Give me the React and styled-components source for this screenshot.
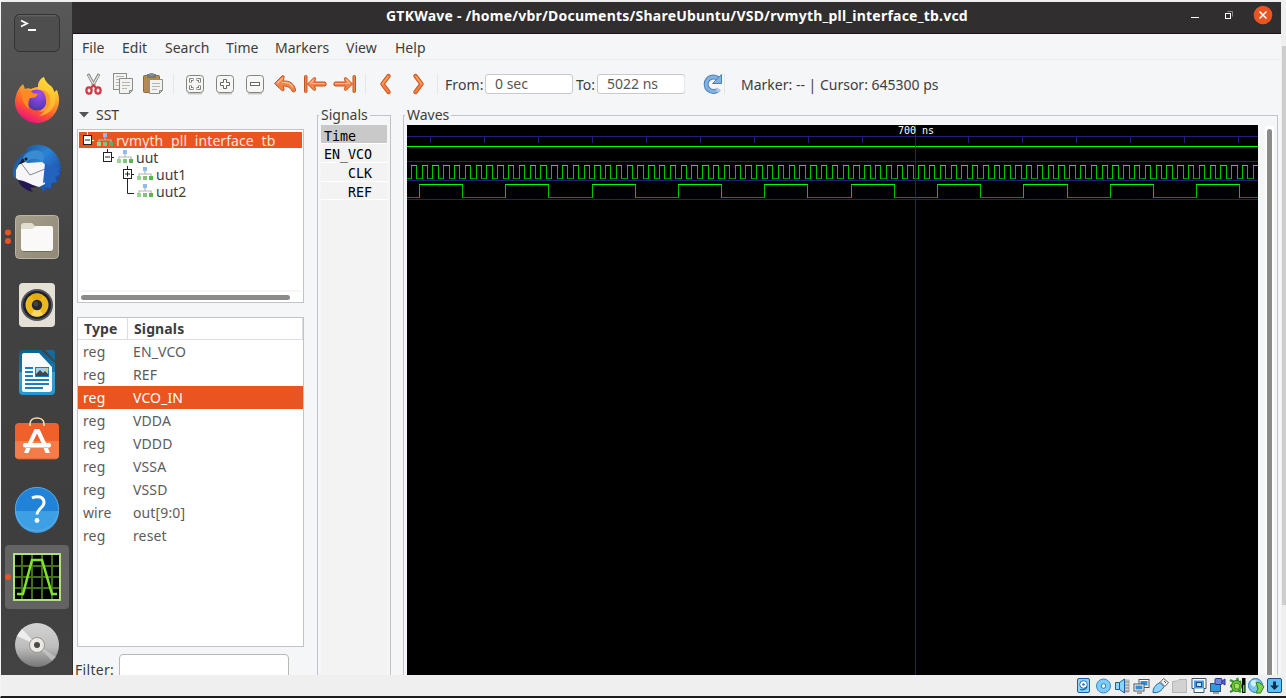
import React from 'react';
import styled, { createGlobalStyle } from 'styled-components';

const Global = createGlobalStyle`
  * { box-sizing: border-box; }
  body { margin: 0; background: #efefef; overflow: hidden; }
  svg { display: block; flex: none; }
`;

const ORANGE = '#e95420';
const LINE = '#c0c3cb';

const Screen = styled.div`
  width: 1286px;
  height: 698px;
  padding-top: 2px;
  background: #efefef;
  border-left: 1px solid #f4f4f4;
  border-bottom: 2px solid #1d1d1f;
  display: flex;
  flex-direction: column;
  overflow: hidden;
  font-family: 'Noto Sans', sans-serif;
  font-size: 14px;
  color: #3d3d3d;
`;
const Desktop = styled.div`
  display: flex;
  height: 673px;
`;

/* Dock */
const Dock = styled.nav`
  width: 72px;
  background: linear-gradient(#585858, #434343 35%, #3e3e3e 80%, #434343);
  border-right: 1px solid #303030;
  padding-left: 4px;
  display: flex;
  flex-direction: column;
  gap: 4px;
  overflow: hidden;
`;
const DockItem = styled.div`
  flex: none;
  width: 64px;
  height: 64px;
  border-radius: 4px;
  background: ${(p) => (p.$active ? '#636363' : 'transparent')};
  &:first-child { margin-top: -1px; }
`;

/* Window */
const Window = styled.main`
  width: 1208px;
  background: #f5f6f7;
  display: flex;
  flex-direction: column;
  overflow: hidden;
`;
const TitleBar = styled.header`
  height: 32px;
  flex: none;
  background: #302e2f;
  border-bottom: 1px solid #1c0f1b;
  display: flex;
  align-items: flex-start;
  color: #fff;
`;
const Title = styled.div`
  width: 1118px;
  padding-left: 313px;
  font-weight: 700;
  font-size: 14px;
  line-height: 28px;
  white-space: nowrap;
  letter-spacing: ${(p) => p.$ls}px;
`;
const MenuBar = styled.div`
  height: 26px;
  flex: none;
  border-bottom: 1px solid #ebebed;
  padding-left: 9px;
  display: flex;
`;
const MenuItem = styled.div`
  width: ${(p) => p.$w}px;
  line-height: 27px;
  white-space: nowrap;
`;
const ToolBar = styled.div`
  height: 48px;
  flex: none;
  padding-left: 5px;
  display: flex;
  align-items: center;
`;
const Tool = styled.div`
  width: ${(p) => p.$w || 30}px;
  height: 24px;
  display: flex;
  align-items: center;
  justify-content: center;
`;
const Sep = styled.div`
  width: 1px;
  height: 20px;
  margin: 0 ${(p) => p.$r}px 0 ${(p) => p.$l}px;
  background: #e6e7e9;
`;
const ToolText = styled.div`
  width: ${(p) => p.$w}px;
  line-height: 20px;
  padding-top: 1px;
  white-space: nowrap;
  letter-spacing: ${(p) => p.$ls || 0}px;
`;
const TimeInput = styled.div`
  width: 88px;
  height: 20px;
  margin-right: ${(p) => p.$r || 0}px;
  border: 1px solid #c9cacf;
  border-radius: 3px;
  background: #fff;
  padding-left: 9px;
  line-height: 18px;
  color: #555;
  white-space: nowrap;
`;

const Body = styled.div`
  flex: 1;
  display: flex;
  min-height: 0;
`;
const LeftPane = styled.section`
  width: 240px;
  padding: 0 8px 0 4px;
  display: flex;
  flex-direction: column;
`;
const SstHead = styled.div`
  height: 21px;
  flex: none;
  display: flex;
  align-items: center;
  gap: 7px;
  padding-left: 2px;
  line-height: 14px;
  padding-bottom: 7px;
`;
const TreeBox = styled.div`
  width: 227px;
  height: 174px;
  flex: none;
  background: #fff;
  border: 1px solid ${LINE};
  padding: 2px 1px 0;
  display: flex;
  flex-direction: column;
`;
const TreeRow = styled.div`
  display: flex;
  height: ${(p) => (p.$sel ? 16 : 17)}px;
  margin-bottom: ${(p) => (p.$sel ? 1 : 0)}px;
  padding-left: ${(p) => p.$depth * 20 + 4}px;
  background: ${(p) => (p.$sel ? ORANGE : 'transparent')};
  color: ${(p) => (p.$sel ? '#fbe3da' : '#3d3d3d')};
`;
const TreeLabel = styled.span`
  padding-left: 3px;
  line-height: 18px;
  white-space: pre;
  letter-spacing: ${(p) => p.$ls || 0}px;
  word-spacing: ${(p) => p.$ws || 0}px;
`;
const HScroll = styled.div`
  margin-top: auto;
  height: 12px;
  border-top: 2px solid #f5f6f7;
  padding: 3px 2px;
`;
const HThumb = styled.div`
  width: 209px;
  height: 5px;
  border-radius: 3px;
  background: #8b8b8a;
`;
const Table = styled.div`
  width: 227px;
  height: 330px;
  flex: none;
  margin-top: 14px;
  border: 1px solid ${LINE};
  background: #fff;
`;
const Row = styled.div`
  height: ${(p) => (p.$head ? 22 : 23)}px;
  display: grid;
  grid-template-columns: 50px 1fr;
  line-height: ${(p) => (p.$head ? 21 : 23)}px;
  font-weight: ${(p) => (p.$head ? 700 : 400)};
  letter-spacing: 0.12px;
  color: ${(p) => (p.$sel ? '#fff' : p.$head ? '#3d3d3d' : '#5c5c5c')};
  background: ${(p) => (p.$sel ? ORANGE : '#fff')};
  border-bottom: ${(p) => (p.$head ? '1px solid #dcdde0' : '0')};
`;
const Cell = styled.div`
  padding-left: ${(p) => (p.$head ? 6 : 5)}px;
  border-right: ${(p) => (p.$head ? '1px solid #dcdde0' : '0')};
  white-space: nowrap;
`;
const FilterRow = styled.div`
  margin: 7px 0 0 -2px;
  display: flex;
`;
const FilterLabel = styled.div`
  width: 44px;
  padding-top: 6px;
  line-height: 20px;
  letter-spacing: 0.3px;
`;
const FilterInput = styled.div`
  width: 170px;
  height: 30px;
  border: 1px solid #b8b9b4;
  border-radius: 4px;
  background: #fff;
`;

const Frame = styled.section`
  width: ${(p) => p.$w}px;
  margin: 7px ${(p) => p.$r}px 0 ${(p) => p.$l}px;
  height: 600px;
  border: 1px solid ${LINE};
`;
const Legend = styled.div`
  width: max-content;
  height: 14px;
  line-height: 14px;
  margin: -8px 0 3px 1px;
  padding: 0 2px;
  background: #f5f6f7;
`;
const NameList = styled.div`
  width: 66px;
  height: 580px;
  margin-left: 3px;
  background: #f3f3f3;
`;
const Name = styled.div`
  height: ${(p) => p.$h}px;
  border-bottom: 1px solid #fff;
  background: ${(p) => (p.$time ? '#c9c9c9' : '#f3f3f3')};
  color: #000;
  font-family: 'DejaVu Sans Mono', monospace;
  font-size: 13.33px;
  line-height: ${(p) => (p.$time ? 23 : 22)}px;
  padding: 0 15px 0 3px;
  text-align: ${(p) => (p.$time ? 'left' : 'right')};
  white-space: nowrap;
`;
const WaveArea = styled.div`
  display: flex;
  margin-left: 3px;
`;
const VTrough = styled.div`
  width: 9px;
  height: 560px;
  margin: 1px 0 0 7px;
  padding: 3px 2px;
  background: #fff;
`;
const VThumb = styled.div`
  height: 560px;
  border-radius: 3px;
  background: #8b8b8a;
`;
const HostScroll = styled.div`
  width: 4px;
  margin-left: 1px;
  height: 559px;
  margin-top: 44px;
  background: #cdcdcd;
`;
const StatusBar = styled.footer`
  height: 21px;
  padding: 2px 0 0 1074px;
  display: flex;
`;
const StatusCell = styled.div`
  width: 19.1px;
  height: 18px;
`;

/* Dock icons, drawn on a 64 x 64 grid */
const DockSvg = ({ children }) => (
  <svg width="64" height="64" viewBox="0 0 64 64">{children}</svg>
);

const TerminalIcon = () => (
  <DockSvg>
    <rect x="9.5" y="13.5" width="45" height="37" rx="5" fill="#4e4e4e" stroke="#333" />
    <path d="M13 14.800h38" stroke="#6a6a6a" />
    <path d="M16 19.500l6 3-6 3" fill="none" stroke="#fff" strokeWidth="1.800" />
    <path d="M23 29h8" stroke="#fff" strokeWidth="2" />
  </DockSvg>
);
const FirefoxIcon = () => (
  <DockSvg>
    <defs>
      <linearGradient id="ff" x1="0.8" y1="0.05" x2="0.35" y2="1">
        <stop offset="0" stopColor="#fff14a" /><stop offset="0.35" stopColor="#ffa72b" />
        <stop offset="0.7" stopColor="#ff5530" /><stop offset="1" stopColor="#e8127c" />
      </linearGradient>
      <radialGradient id="fp" cx="0.6" cy="0.2" r="0.9">
        <stop offset="0" stopColor="#a24bf5" /><stop offset="1" stopColor="#46349f" />
      </radialGradient>
    </defs>
    <path d="M11 27c1-5 3-8 7-12l2 5c2-1 4-1 6 0 2-1 4-2 7-2 0-5 2-8 6-10 1 5 4 7 7 9 2 2 3 4 3 6l3-2c1 3 2 6 2 10 0 13-10 23-22 23S10 44 10 33c0-2 0-4 1-6z" fill="url(#ff)" />
    <path d="M33 18c0-5 2-8 6-10 1 6 10 9 11 19 2 11-6 19-16 20 8-5 10-14 6-20-2-4-6-5-7-9z" fill="#ffcf32" opacity="0.65" />
    <circle cx="32" cy="31" r="10.5" fill="url(#fp)" />
    <path d="M17 23c5-3 8-2 11 1l5 1c-2 4-5 4-8 4-2 3-2 7-1 11-5-4-8-10-7-17z" fill="#ff8a22" />
    <path d="M37 21c6 1 9 6 8 11 0 7-5 11-11 11 5-3 8-7 7-12 0-4-2-7-4-10z" fill="#ff9a2a" />
  </DockSvg>
);
const ThunderbirdIcon = () => (
  <DockSvg>
    <defs>
      <linearGradient id="tb" x1="0" y1="0" x2="1" y2="0.8">
        <stop offset="0" stopColor="#153f7c" /><stop offset="0.5" stopColor="#2a83d6" /><stop offset="1" stopColor="#183f99" />
      </linearGradient>
    </defs>
    <path d="M8 36c0-9 5-17 13-21l2-5 6-2c14-2 26 9 27 23 0 7-2 12-6 16l-2-2-2 8-4-2-5 5v-5l-20-7-4-1c-3-2-5-4-5-7z" fill="url(#tb)" />
    <path d="M19 19c4-5 10-7 16-5 5 2 5 7 2 11-3-4-8-4-13-2l-6 7c-2-4-1-8 1-11z" fill="#3a8bd0" />
    <path d="M11 33l5-9 7 2 14-1 4 3-1 19-6 3-19-6-4-3z" fill="#f6f5f7" />
    <path d="M16 26l9 12 15-6" fill="none" stroke="#8a8a8e" />
    <path d="M13 43c6 0 12 4 19 7l-7 1 3 4c-8-2-13-6-15-12z" fill="#251852" />
    <path d="M40 26c5 4 11 5 15 4l-2 5 2 2-5 3 2 5-6 1 0 5-6-1 1-5-3 1z" fill="#2463bd" />
    <circle cx="21" cy="22" r="1.500" fill="#111" /><path d="M18 21l-5 7 7-3z" fill="#171b33" />
  </DockSvg>
);
const FilesIcon = () => (
  <DockSvg>
    <defs>
      <linearGradient id="fl" x1="0" y1="0" x2="1" y2="1">
        <stop offset="0" stopColor="#a59e8c" /><stop offset="1" stopColor="#8f8876" />
      </linearGradient>
    </defs>
    <circle cx="3" cy="27.6" r="3" fill={ORANGE} /><circle cx="3" cy="36" r="3" fill={ORANGE} />
    <rect x="10.5" y="10.5" width="43" height="43" rx="4" fill="url(#fl)" stroke="#b9b3a2" />
    <path d="M16 21a3 3 0 013-3h8l4 4-2 5H16z" fill="#e0dccf" />
    <path d="M16 24h11l4-3h15a2 2 0 012 2v20a3 3 0 01-3 3H19a3 3 0 01-3-3z" fill="#faf9f8" />
    <path d="M18 46.5h28" stroke="#726c5d" />
  </DockSvg>
);
const RhythmboxIcon = () => (
  <DockSvg>
    <rect x="14" y="10" width="36" height="44" rx="4" fill="#e4e0d6" />
    <circle cx="32" cy="32" r="16" fill="#53555f" /><circle cx="32" cy="32" r="14" fill="#1f222b" />
    <circle cx="32" cy="32" r="11.5" fill="#ecb91c" />
    <path d="M32 32l-6 10a11.5 11.5 0 0012 0z" fill="#f8d95c" /><path d="M32 32l-6-10a11.5 11.5 0 0112 0z" fill="#e2ab12" />
    <circle cx="32" cy="32" r="5.2" fill="#26272a" /><circle cx="31" cy="31" r="2.5" fill="#424346" />
  </DockSvg>
);
const WriterIcon = () => (
  <DockSvg>
    <defs>
      <linearGradient id="wr" x1="0" y1="0" x2="0" y2="1">
        <stop offset="0" stopColor="#0d6292" /><stop offset="0.49" stopColor="#1579b0" />
        <stop offset="0.5" stopColor="#389fce" /><stop offset="1" stopColor="#2795cd" />
      </linearGradient>
    </defs>
    <path d="M18 9h18l14 13v28a4 4 0 01-4 4H18a4 4 0 01-4-4V13a4 4 0 014-4z" fill="url(#wr)" />
    <path d="M40 9h7a3 3 0 013 3v8z" fill="#16699d" />
    <path d="M19 12h15l13 14v22a3 3 0 01-3 3H19a2 2 0 01-2-2V14a2 2 0 012-2z" fill="#fbfbfb" />
    <path d="M20 27h8M20 31h8M20 35h8M20 39h24M20 43h24M20 47h18" stroke="#1c7fbd" strokeWidth="2" />
    <rect x="30.5" y="26.5" width="13" height="9" fill="#9fd2f2" stroke="#1c7fbd" />
    <path d="M31 35v-2l4-4 3 3 2-2 3 3v2z" fill="#3f464d" /><circle cx="42" cy="28.500" r="1.5" fill="#f2cc2c" />
  </DockSvg>
);
const SoftwareIcon = () => (
  <DockSvg>
    <rect x="10" y="14" width="44" height="36" rx="4" fill="#f0602b" />
    <path d="M10 32h44v14a4 4 0 01-4 4H14a4 4 0 01-4-4z" fill="#f37c4a" />
    <path d="M13 50.200h38" stroke="#b94c23" />
    <path d="M25 17v-2c0-8 14-8 14 0v2" fill="none" stroke="#f6dfae" strokeWidth="1.6" />
    <path d="M29.500 20h5l7.500 16h-4.500L32 24.500 26.500 36H22zM21 39h4.500l-2 5H19zM38.500 39H43l2 5h-4.500z" fill="#fff" />
    <rect x="18" y="34" width="28" height="4.500" rx="2" fill="#fff" />
  </DockSvg>
);
const HelpIcon = () => (
  <DockSvg>
    <circle cx="32" cy="32" r="22" fill="#2083d8" />
    <path d="M10 34a22 22 0 0044 0z" fill="#3d9fe4" />
    <circle cx="32" cy="32" r="21.600" fill="none" stroke="#64aee6" strokeWidth="0.8" />
    <path d="M27 21c5-2.500 12-1.500 12 4.500 0 5-6.500 6-7 12" fill="none" stroke="#fff" strokeWidth="3" />
    <circle cx="32" cy="43.500" r="2.400" fill="#fff" />
  </DockSvg>
);
const GtkWaveIcon = () => (
  <DockSvg>
    <circle cx="3" cy="32" r="3" fill={ORANGE} />
    <rect x="9" y="9" width="46" height="46" fill="#000" stroke="#b0e080" strokeWidth="2" />
    <path d="M17 10v44M27 10v44M37 10v44M47 10v44M10 21h44M10 32h44M10 43h44" stroke="#446f1a" strokeWidth="2" />
    <path d="M12 49h6l9-34h10l10 34h5" fill="none" stroke="#80e32c" strokeWidth="2.500" />
  </DockSvg>
);
const DiscIcon = () => (
  <DockSvg>
    <defs>
      <linearGradient id="dc" x1="0" y1="0" x2="0" y2="1">
        <stop offset="0" stopColor="#d4d4d4" /><stop offset="0.55" stopColor="#bdbdbd" /><stop offset="1" stopColor="#777" />
      </linearGradient>
    </defs>
    <circle cx="32" cy="32" r="22" fill="url(#dc)" />
    <path d="M32 32L12 23l5-7z" fill="#f6f6f6" opacity="0.8" />
    <path d="M32 32l19 12-4 4z" fill="#e0e0e0" opacity="0.45" />
    <circle cx="32" cy="32" r="7.500" fill="#ece9e4" stroke="#99958c" /><circle cx="32" cy="32" r="3" fill="#4a4a4a" />
  </DockSvg>
);

const DOCK = [
  TerminalIcon, FirefoxIcon, ThunderbirdIcon, FilesIcon, RhythmboxIcon,
  WriterIcon, SoftwareIcon, HelpIcon, GtkWaveIcon, DiscIcon,
];

/* Toolbar icons */
const T = ({ w = 24, children }) => (
  <svg width={w} height="24" viewBox={`0 0 ${w} 24`}>{children}</svg>
);
const CutIcon = () => (
  <T>
    <path d="M7 2l6.500 12M18 2L11.500 14" stroke="#888a85" strokeWidth="3" />
    <path d="M7.300 3l5.700 10M17.700 3L12 13" stroke="#e8e8e6" strokeWidth="1.200" />
    <ellipse cx="8" cy="18.500" rx="2.600" ry="3.100" fill="none" stroke="#cf3b42" strokeWidth="2.300" />
    <ellipse cx="17" cy="18.500" rx="2.600" ry="3.100" fill="none" stroke="#cf3b42" strokeWidth="2.300" />
    <path d="M10 16l2.500-3 2.500 3" stroke="#cf3b42" strokeWidth="2" fill="none" />
  </T>
);
const CopyIcon = () => (
  <T>
    <rect x="2.500" y="1.500" width="13" height="16" fill="#f2f2f0" stroke="#8c8e89" />
    <path d="M5 4.500h8M5 7.500h8M5 10.500h4M5 13.500h4" stroke="#b6b7b3" />
    <path d="M8.500 6.500h13v12l-3 3h-10z" fill="#f2f2f0" stroke="#8c8e89" />
    <path d="M11 10.500h8M11 13.500h8M11 16.500h5" stroke="#b6b7b3" />
    <path d="M21.500 18.500h-3v3z" fill="#ccc" stroke="#8c8e89" />
  </T>
);
const PasteIcon = () => (
  <T>
    <rect x="2.500" y="3.500" width="16" height="17" rx="1" fill="#b38b52" stroke="#8d6b38" />
    <rect x="6" y="2" width="9" height="4" fill="#777974" /><rect x="8.500" y="1" width="4" height="3" fill="#8c8e89" />
    <path d="M8.500 7.500h13v11l-3 3h-10z" fill="#f2f2f0" stroke="#8c8e89" />
    <path d="M11 11.500h8M11 14.500h8M11 17.500h5" stroke="#b6b7b3" />
    <path d="M21.500 18.500h-3v3z" fill="#ccc" stroke="#8c8e89" />
  </T>
);
const ZoomBase = ({ children }) => (
  <T>
    <path d="M5 21.500h14" stroke="#c9cac8" strokeWidth="2" />
    <rect x="3.500" y="3.500" width="17" height="17" rx="3" fill="#f6f6f5" stroke="#82847f" />
    {children}
  </T>
);
const ZoomFit = () => (
  <ZoomBase>
    <path d="M7.500 10.500v-3h3M13.500 7.500h3v3M16.500 13.500v3h-3M10.500 16.500h-3v-3" fill="none" stroke="#666863" strokeWidth="2.600" />
    <path d="M7.500 10v-2.500h2.500M14 7.500h2.500v2.500M16.500 14v2.500h-2.500M10 16.500h-2.500v-2.500" fill="none" stroke="#fff" strokeWidth="1" />
  </ZoomBase>
);
const ZoomIn = () => (
  <ZoomBase>
    <path d="M10.500 7.500h3v3h3v3h-3v3h-3v-3h-3v-3h3z" fill="#fff" stroke="#666863" />
  </ZoomBase>
);
const ZoomOut = () => (
  <ZoomBase><rect x="7.500" y="10.500" width="9" height="3" fill="#fff" stroke="#666863" /></ZoomBase>
);
const arrow = { fill: '#f0854b', stroke: '#c9501c', strokeWidth: 1, strokeLinejoin: 'round' };
const UndoIcon = () => (
  <T>
    <path {...arrow} d="M1.500 11.500L9 4c1-1 2.500 0 2 1.500L10 9c7-.5 11.500 3 12.500 9 .3 2-2.500 2.500-3.500 1-2-4-5-5-9-5l1 3c.5 1.500-1 2.500-2 1.500z" />
    <path d="M4 11.500l6-5.500M9 10.500c5-.5 9 1 11 5" fill="none" stroke="#fbc08a" strokeWidth="1.200" />
  </T>
);
const FirstIcon = () => (
  <T>
    <rect {...arrow} x="1.500" y="3.500" width="2.500" height="17" rx="1" />
    <path {...arrow} d="M4.500 12l6-6c1.500-1.200 2.500 0 2 1.500l-1 2.500H22c1.500 0 1.500 4 0 4H11.500l1 2.500c.5 1.500-.5 2.700-2 1.500z" />
    <path d="M7 11.500l4-4M9 11.500h12.500" fill="none" stroke="#fbc08a" strokeWidth="1.100" />
  </T>
);
const LastIcon = () => (
  <T>
    <rect {...arrow} x="20" y="3.500" width="2.500" height="17" rx="1" />
    <path {...arrow} d="M19.500 12l-6-6c-1.500-1.200-2.500 0-2 1.500l1 2.500H2c-1.500 0-1.500 4 0 4h10.500l-1 2.500c-.5 1.500.5 2.700 2 1.500z" />
    <path d="M17 11.500l-4-4M2 11.500h13" fill="none" stroke="#fbc08a" strokeWidth="1.100" />
  </T>
);
const Chevron = ({ right }) => (
  <T>
    <g transform={right ? 'translate(23 0) scale(-1 1)' : undefined} fill="none" strokeLinecap="round" strokeLinejoin="round">
      <path d="M14.500 4L8.500 12l6 8" stroke="#c9501c" strokeWidth="4.400" />
      <path d="M14.500 4L8.500 12l6 8" stroke="#f28040" strokeWidth="2.600" />
      <path d="M14 4.500L8.500 12" stroke="#f7a869" strokeWidth="1.200" />
    </g>
  </T>
);
const ReloadIcon = () => (
  <T>
    <path d="M17.500 7A7.300 7.300 0 1018 17" fill="none" stroke="#4a82c0" strokeWidth="5" />
    <path d="M17.500 7A7.300 7.300 0 1018 17" fill="none" stroke="#83b0dc" strokeWidth="3" />
    <path d="M20.500 2.500v9h-9z" fill="#83b0dc" stroke="#4a82c0" />
    <path d="M13.500 14.500h8v6h-5z" fill="#f5f6f7" opacity="0.450" />
  </T>
);

const HierIcon = () => (
  <svg width="16" height="16" viewBox="0 0 16 16">
    <path d="M8 4v4M2 10V8h12v2" fill="none" stroke="#b4b6b2" strokeWidth="1.200" />
    <rect x="6" y="1" width="4" height="4" fill="#8fbcec" />
    <rect x="0" y="10" width="4" height="4" fill="#98d692" />
    <rect x="6" y="10" width="4" height="4" fill="#7cc676" />
    <rect x="12" y="10" width="4" height="4" fill="#5db257" />
  </svg>
);
const Expander = ({ kind, light }) => (
  <svg width="14" height="17" viewBox="0 0 14 17">
    {kind === 'leaf' ? (
      <path d="M4.500 0v10.500H11" fill="none" stroke="#222" />
    ) : (
      <>
        <path d={kind === 'plus' ? 'M4.500 0v17M9 8.500h2' : 'M4.500 0v4M9 8.500h2'} stroke={light ? '#fff' : '#222'} />
        <rect x="0.500" y="3.500" width="8" height="9" fill="#fff" stroke="#222" />
        <path d={kind === 'plus' ? 'M2 8h5M4.500 5.500v5' : 'M2 8h5'} stroke="#222" />
      </>
    )}
  </svg>
);

/* Waveforms: 851 px wide view, x origin at the left edge of the canvas */
const VIEW = 851;
const edges = (rise, high, period) => {
  const list = [];
  for (let i = -1; rise + i * period < VIEW; i += 1) {
    list.push([Math.floor(rise + i * period), Math.floor(rise + i * period + high)]);
  }
  return list;
};
const Square = ({ rise, high, period, top, bottom }) => {
  const list = edges(rise, high, period);
  const up = list.map(([a, b]) => `M${a} ${top + 0.5}H${b + 1}`).join('');
  const down = list.map(([, b], i) => `M${b} ${bottom + 0.5}H${list[i + 1] ? list[i + 1][0] + 1 : VIEW}`).join('');
  const sides = list.map(([a, b]) => `M${a + 0.5} ${top}V${bottom + 1}M${b + 0.5} ${top}V${bottom + 1}`).join('');
  return (
    <g fill="none">
      <path d={down} stroke="#008800" />
      <path d={sides} stroke="#00c400" />
      <path d={up} stroke="#00ff00" />
    </g>
  );
};
const WaveText = styled.text`
  font-family: 'DejaVu Sans Mono', monospace;
  font-size: 10px;
  fill: #fff;
`;
const TICKS = [23, 77, 131, 185, 239, 293, 347, 401, 455, 508, 561, 615, 669, 723, 777, 831];
const WaveCanvas = () => (
  <svg width={VIEW} height="550" viewBox={`0 0 ${VIEW} 550`}>
    <rect width={VIEW} height="550" fill="#000" />
    <g stroke="#202078">
      {[11, 36, 55, 74].map((y) => <path key={y} d={`M0 ${y + 0.5}H${VIEW}`} />)}
      {TICKS.map((x) => <path key={x} d={`M${x + 0.5} 12V18`} />)}
    </g>
    <path d={`M0 21.500H${VIEW}`} stroke="#00ff00" />
    <Square rise={4.3} high={5.4} period={10.794} top={40} bottom={53} />
    <Square rise={12.4} high={43.2} period={86.35} top={59} bottom={72} />
    <path d="M508.500 0V550" stroke="#202078" />
    <WaveText x="491" y="9">700 ns</WaveText>
  </svg>
);

/* Status bar icons */
const S = ({ children }) => <svg width="18" height="18" viewBox="0 0 18 18">{children}</svg>;
const blue = { fill: '#8fd3fa', stroke: '#1b5f9e' };
const STATUS = [
  <S><rect x="2.500" y="1.500" width="12" height="14" rx="1.500" {...blue} /><circle cx="8.500" cy="7.500" r="3.800" fill="#fff" stroke="#1f74b8" /><path d="M5 12.500c3 1 6 0 7-3" fill="none" stroke="#1b5f9e" strokeWidth="1.300" /><circle cx="8.500" cy="7.500" r="1.300" fill="#1f74b8" /></S>,
  <S><circle cx="9.500" cy="9" r="7" fill="#7ccdf8" stroke="#3b87c8" /><circle cx="9.500" cy="9" r="2.300" fill="#e8f6fe" stroke="#2c7cc0" /></S>,
  <S><path d="M10 3h6v12h-6z" fill="#d0d0d0" stroke="#aaa" /><path d="M12 5h4M12 8h4M12 11h4M12 14h4" stroke="#888" /><path d="M2.500 5.500h4v7h-4zM6.500 5.500l5-3.500v14l-5-3.500z" {...blue} /></S>,
  <S><rect x="7" y="2.500" width="10" height="8" fill="#fff" stroke="#555" /><rect x="8.500" y="4" width="7" height="4.500" fill="#2f8fd8" /><rect x="2" y="7" width="10" height="7" fill="#fff" stroke="#555" /><rect x="3.500" y="8.500" width="7" height="4" fill="#2f8fd8" /><path d="M5 16h5" stroke="#555" /></S>,
  <S><path d="M2 15.500c0-5 3-8 7-10l4 4c-2 4-6 7-11 6z" {...blue} /><path d="M9.500 5l3-3.500 5 4-3.500 4z" fill="#f4f4f4" stroke="#666" /><path d="M13 4l2 2" stroke="#444" /></S>,
  <S><path d="M2.500 4.500l5-.5 1.500-1.500h7.500v13h-14z" fill="#d2d2d2" stroke="#b4b4b4" /></S>,
  <S><path d="M2 1.500h14v10h-2v4h-10v-4h-2z" fill="#fff" stroke="#3a5468" /><rect x="4" y="3.500" width="10" height="8" fill="#3f9fe2" /><rect x="6.500" y="5.500" width="5" height="4" fill="#bfe6fc" stroke="#1b4f86" /></S>,
  <S><rect x="1.500" y="6.500" width="10" height="8" fill="#2f9ae0" stroke="#3a5468" /><path d="M4 16h6" stroke="#555" /><rect x="6" y="1.500" width="7" height="6" rx="1" fill="#7186e0" stroke="#2b3591" /><path d="M13 4l3-2v6l-3-2z" fill="#5267c9" stroke="#2b3591" /></S>,
  <S><rect x="14" y="1" width="3.500" height="15" fill="#000" /><rect x="15" y="8" width="1.500" height="7" fill="#3fd54a" /><path d="M2 3l4 2M9 1l1 3M2 15l4-2M13 15l-3-2M2 9h3M13 4l-2 2" stroke="#339a2c" strokeWidth="2.400" /><ellipse cx="8.500" cy="9" rx="5" ry="5.500" fill="#77c93c" stroke="#27701a" /><path d="M6 7l3-1 3 2-1 4-4 0z" fill="#a5e063" stroke="#3b8c22" /></S>,
  <S><circle cx="8.500" cy="8.500" r="7" fill="#7cc6ef" stroke="#2f78b3" /><path d="M4 4c3-2 6-1 7 1l-4 5c-2-1-4-3-3-6z" fill="#d2effc" /><path d="M9 5l4 1 4 3.500-3.500 6.500H9l2-4z" fill="#7ed44a" stroke="#2c7f22" /></S>,
  <S><rect x="1.500" y="1.500" width="14" height="14" rx="1.500" fill="#5cc0f5" stroke="#1b4f86" /><path d="M7 4.500h3v4h3L8.500 13 4 8.500h3z" fill="#10304f" /></S>,
];

const MENU = [['File', 40], ['Edit', 43], ['Search', 61], ['Time', 49], ['Markers', 71], ['View', 49], ['Help', 40]];
const SIGNALS = [
  ['reg', 'EN_VCO'], ['reg', 'REF'], ['reg', 'VCO_IN'], ['reg', 'VDDA'], ['reg', 'VDDD'],
  ['reg', 'VSSA'], ['reg', 'VSSD'], ['wire', 'out[9:0]'], ['reg', 'reset'],
];

export default function App() {
  return (
    <>
      <Global />
      <Screen>
        <Desktop>
          <Dock>
            {DOCK.map((Icon, i) => (
              <DockItem key={i} $active={Icon === GtkWaveIcon}><Icon /></DockItem>
            ))}
          </Dock>
          <Window>
            <TitleBar>
              <Title $ls={0.22}>GTKWave - /home/vbr/Documents/ShareUbuntu/VSD/rvmyth_pll_interface_tb.vcd</Title>
              <svg width="86" height="28" viewBox="0 0 86 28">
                <path d="M0 15.500h8" stroke="#fff" />
                <path d="M36.500 9.500h5v5" fill="none" stroke="#888" />
                <rect x="34.500" y="11.500" width="5" height="5" fill="none" stroke="#fff" />
                <circle cx="72" cy="13" r="9.300" fill={ORANGE} />
                <path d="M68.500 9.500l7 7M75.500 9.500l-7 7" stroke="#fff" strokeWidth="1.500" />
              </svg>
            </TitleBar>
            <MenuBar>
              {MENU.map(([label, w]) => <MenuItem key={label} $w={w}>{label}</MenuItem>)}
            </MenuBar>
            <ToolBar>
              <Tool><CutIcon /></Tool>
              <Tool><CopyIcon /></Tool>
              <Tool><PasteIcon /></Tool>
              <Sep $l={5} $r={6} />
              <Tool><ZoomFit /></Tool>
              <Tool><ZoomIn /></Tool>
              <Tool><ZoomOut /></Tool>
              <Tool><UndoIcon /></Tool>
              <Tool><FirstIcon /></Tool>
              <Tool><LastIcon /></Tool>
              <Sep $l={5} $r={5} />
              <Tool $w={29}><Chevron /></Tool>
              <Tool $w={37}><Chevron right /></Tool>
              <Sep $l={0} $r={7} />
              <ToolText $w={40} $ls={0.1}>From:</ToolText>
              <TimeInput $r={3}>0 sec</TimeInput>
              <ToolText $w={21}>To:</ToolText>
              <TimeInput>5022 ns</TimeInput>
              <Sep $l={-1} $r={13} />
              <Tool $w={30}><ReloadIcon /></Tool>
              <Sep $l={-4} $r={16} />
              <ToolText $w={220}>Marker: -- | Cursor: 645300 ps</ToolText>
            </ToolBar>
            <Body>
              <LeftPane>
                <SstHead>
                  <svg width="10" height="6" viewBox="0 0 10 6"><path d="M0 0h10L5 5.500z" fill="#555" /></svg>
                  SST
                </SstHead>
                <TreeBox>
                  <TreeRow $depth={0} $sel>
                    <Expander kind="minus" light /><HierIcon /><TreeLabel $ws={4} $ls={0.08}>rvmyth pll interface tb</TreeLabel>
                  </TreeRow>
                  <TreeRow $depth={1}><Expander kind="minus" /><HierIcon /><TreeLabel>uut</TreeLabel></TreeRow>
                  <TreeRow $depth={2}><Expander kind="plus" /><HierIcon /><TreeLabel>uut1</TreeLabel></TreeRow>
                  <TreeRow $depth={2}><Expander kind="leaf" /><HierIcon /><TreeLabel>uut2</TreeLabel></TreeRow>
                  <HScroll><HThumb /></HScroll>
                </TreeBox>
                <Table>
                  <Row $head><Cell $head>Type</Cell><Cell $head>Signals</Cell></Row>
                  {SIGNALS.map(([type, name]) => (
                    <Row key={name} $sel={name === 'VCO_IN'}><Cell>{type}</Cell><Cell>{name}</Cell></Row>
                  ))}
                </Table>
                <FilterRow><FilterLabel>Filter:</FilterLabel><FilterInput /></FilterRow>
              </LeftPane>
              <Frame $w={74} $l={4} $r={12}>
                <Legend>Signals</Legend>
                <NameList>
                  <Name $time $h={19}>Time</Name>
                  <Name $h={19}>EN_VCO</Name>
                  <Name $h={19}>CLK</Name>
                  <Name $h={18}>REF</Name>
                </NameList>
              </Frame>
              <Frame $w={875} $l={0} $r={0}>
                <Legend>Waves</Legend>
                <WaveArea>
                  <WaveCanvas />
                  <VTrough><VThumb /></VTrough>
                </WaveArea>
              </Frame>
            </Body>
          </Window>
          <HostScroll />
        </Desktop>
        <StatusBar>
          {STATUS.map((icon, i) => <StatusCell key={i}>{icon}</StatusCell>)}
        </StatusBar>
      </Screen>
    </>
  );
}
